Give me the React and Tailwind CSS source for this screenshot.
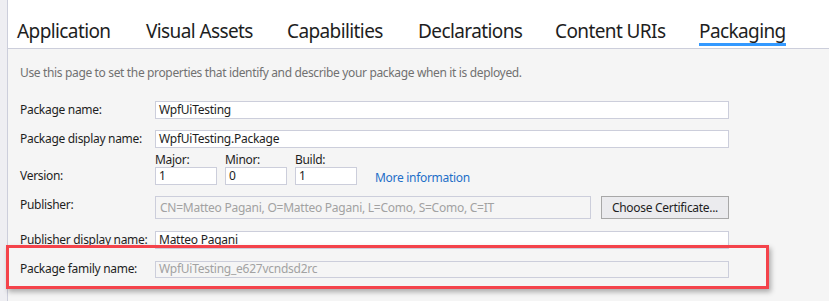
const font = { fontFamily: '"Segoe UI", "Noto Sans", sans-serif' }

const tabs = [
  { name: 'Application', w: 'w-[129px]' },
  { name: 'Visual Assets', w: 'w-[141px]' },
  { name: 'Capabilities', w: 'w-[131px]' },
  { name: 'Declarations', w: 'w-[137px]' },
  { name: 'Content URIs', w: 'w-[144px]' },
  { name: 'Packaging', w: 'w-[90px]', active: true },
]

function TextBox({ value, disabled, className = '' }) {
  return (
    <div
      className={
        'flex items-center border px-[3px] text-[12px] tracking-[-0.25px] leading-none whitespace-nowrap ' +
        (disabled
          ? 'bg-[#f5f5f5] border-[#cccedb] text-[#a2a2a2] '
          : 'bg-white border-[#cccedb] text-[#1e1e1e] ') +
        className
      }
    >
      {value}
    </div>
  )
}

function Row({ label, children, className = '' }) {
  return (
    <div className={'flex items-center ' + className}>
      <div className="w-[135px] text-[12px] tracking-[-0.3px] text-[#1e1e1e]">{label}</div>
      {children}
    </div>
  )
}

export default function App() {
  return (
    <div className="relative flex w-[829px] h-[301px] overflow-hidden bg-[#f5f5f5]" style={font}>
      <div className="w-[8px] shrink-0 bg-[#eeeef2] border-r border-[#cccedb]" />
      <div className="flex flex-1 flex-col">
        <div className="flex h-[49px] items-end border-b border-[#cccedb] bg-white pl-[9px]">
          {tabs.map((t) => (
            <div key={t.name} className={t.w + ' shrink-0'}>
              <div className="inline-flex flex-col">
                <span className="text-[19px] tracking-[-0.6px] leading-[24px] text-[#1e1e1e] whitespace-nowrap">{t.name}</span>
                <span className={'mb-[2px] h-[3px] ' + (t.active ? 'bg-[#3399ff]' : 'bg-transparent')} />
              </div>
            </div>
          ))}
        </div>

        <div className="flex flex-col pl-[12px]">
          <p className="mt-[16px] text-[12px] tracking-[-0.35px] leading-[16px] text-[#717171]">
            Use this page to set the properties that identify and describe your package when it is deployed.
          </p>

          <Row label="Package name:" className="mt-[20px]">
            <TextBox value="WpfUiTesting" className="w-[574px] h-[18px]" />
          </Row>

          <Row label="Package display name:" className="mt-[11px]">
            <TextBox value="WpfUiTesting.Package" className="w-[574px] h-[18px]" />
          </Row>

          <div className="mt-[4px] flex">
            <div className="w-[135px] self-end text-[12px] tracking-[-0.3px] text-[#1e1e1e]">Version:</div>
            {['Major:', 'Minor:', 'Build:'].map((v, i) => (
              <div key={v} className="mr-[8px] flex flex-col">
                <span className="text-[12px] tracking-[-0.3px] leading-[15px] text-[#1e1e1e]">{v}</span>
                <TextBox value={i === 1 ? '0' : '1'} className="w-[62px] h-[18px]" />
              </div>
            ))}
            <a className="ml-[10px] mb-[-2px] self-end text-[12px] tracking-[-0.3px] text-[#1e6fc8]">More information</a>
          </div>

          <div className="mt-[11px] flex items-start">
            <div className="w-[135px] text-[12px] tracking-[-0.3px] text-[#1e1e1e]">Publisher:</div>
            <TextBox
              disabled
              value="CN=Matteo Pagani, O=Matteo Pagani, L=Como, S=Como, C=IT"
              className="w-[436px] h-[23px] pl-[4px]"
            />
            <button
              type="button"
              className="ml-[10px] h-[23px] w-[128px] border border-[#a8a8a8] bg-[#ebebee] text-[12px] tracking-[-0.3px] text-[#1e1e1e]"
            >
              Choose Certificate...
            </button>
          </div>

          <Row label="Publisher display name:" className="mt-[12px]">
            <TextBox value="Matteo Pagani" className="w-[574px] h-[18px]" />
          </Row>

          <Row label="Package family name:" className="mt-[11px]">
            <TextBox disabled value="WpfUiTesting_e627vcndsd2rc" className="w-[574px] h-[17px]" />
          </Row>
        </div>
      </div>

      <div className="pointer-events-none absolute left-[6px] top-[245px] h-[44px] w-[763px] border-[3px] border-[#f4434b] shadow-[2px_3px_5px_rgba(0,0,0,0.3)]" />
    </div>
  )
}
